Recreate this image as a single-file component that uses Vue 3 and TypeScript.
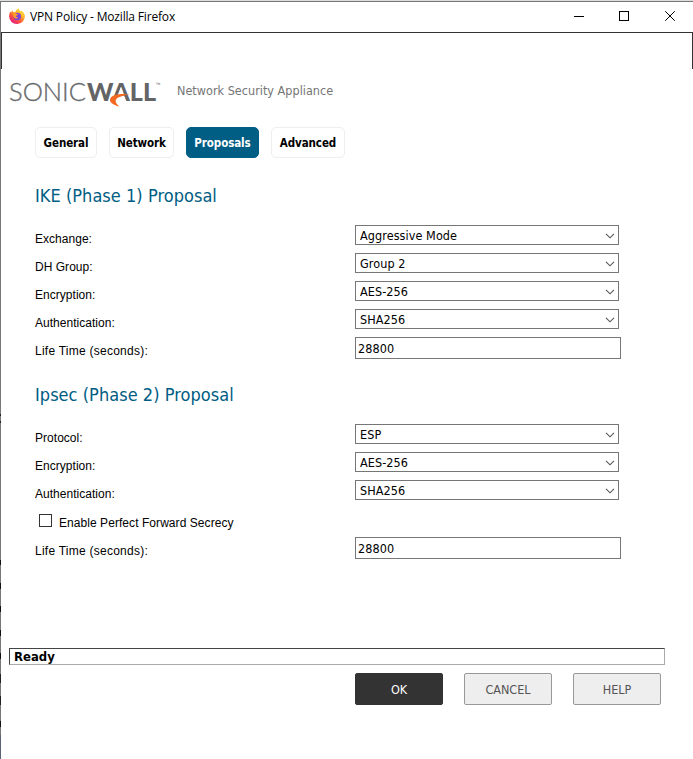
<script setup lang="ts">
import { ref } from 'vue'

interface Field {
  label: string
  value: string
  kind: 'select' | 'text' | 'check'
}

const tabs = ['General', 'Network', 'Proposals', 'Advanced']
const active = ref('Proposals')

const phase1: Field[] = [
  { label: 'Exchange:', value: 'Aggressive Mode', kind: 'select' },
  { label: 'DH Group:', value: 'Group 2', kind: 'select' },
  { label: 'Encryption:', value: 'AES-256', kind: 'select' },
  { label: 'Authentication:', value: 'SHA256', kind: 'select' },
  { label: 'Life Time (seconds):', value: '28800', kind: 'text' },
]
const phase2: Field[] = [
  { label: 'Protocol:', value: 'ESP', kind: 'select' },
  { label: 'Encryption:', value: 'AES-256', kind: 'select' },
  { label: 'Authentication:', value: 'SHA256', kind: 'select' },
  { label: 'Enable Perfect Forward Secrecy', value: '', kind: 'check' },
  { label: 'Life Time (seconds):', value: '28800', kind: 'text' },
]
const sections = [
  { title: 'IKE (Phase 1) Proposal', fields: phase1 },
  { title: 'Ipsec (Phase 2) Proposal', fields: phase2 },
]
</script>

<template>
  <div class="window">
    <div class="edge"></div>
    <div class="main">
      <header class="titlebar">
        <svg class="fox" width="16" height="16" viewBox="0 0 16 16">
          <defs>
            <linearGradient id="flame" x1="0.85" y1="0.05" x2="0.2" y2="0.95">
              <stop offset="0" stop-color="#fff03f" />
              <stop offset="0.35" stop-color="#ffb52b" />
              <stop offset="0.65" stop-color="#ff5a36" />
              <stop offset="1" stop-color="#e31587" />
            </linearGradient>
          </defs>
          <path d="M1.2 3.4 2 4.6 3.7 2.2 4.3 4.2 6.3 3.9C7 2 8.400 1 9.600 0c-.1 1.700 1 2.500 2.300 3.300l.5-.8c1.900 1.400 3.500 3.500 3.500 6.100A7.800 7.400 0 0 1 8 16 7.800 7.600 0 0 1 .1 8.600C0 6.600.5 4.900 1.200 3.400Z" fill="url(#flame)" />
          <circle cx="8.300" cy="8.500" r="3.700" fill="#7a42dc" />
          <path d="M3.600 5.200c1.500-.9 3-.4 3.900.6l2 .3c-.3 1-1.600 1.100-2.200 1.700-.5.900.4 2.200 2.200 1.500-1 2.400-5.400 1.800-5.900-4.100Z" fill="#ff9a2c" />
        </svg>
        <span class="caption">VPN Policy - Mozilla Firefox</span>
        <svg class="controls" width="104" height="12" viewBox="0 0 104 12" fill="none" stroke="#000" stroke-width="1">
          <path d="M0 6.500h10" />
          <rect x="45.500" y="1.500" width="9" height="9" />
          <path d="M91.200 1.200 100.800 10.800M100.800 1.200 91.200 10.800" />
        </svg>
      </header>
      <div class="address"></div>

      <div class="brand">
        <svg class="logo" width="152" height="28" viewBox="0 0 152 28">
          <text class="thin" x="0" y="21.500" textLength="77" lengthAdjust="spacingAndGlyphs">SONIC</text>
          <text class="heavy" x="78" y="21.500" textLength="69" lengthAdjust="spacingAndGlyphs">WALL</text>
          <path d="M112 8 108.800 16 105.500 22h11.200L114.800 16Z" fill="#fff" />
          <path d="M120.500 15.400c-8-1.200-17.200-.4-19.300 4.300-1.300 3.300 2.800 6.200 9 7.800-3.300-3.300-4.500-5.700-2.600-7.800 2.300-2.500 7.500-3 12.900-4.300Z" fill="#f26a21" />
          <text class="tm" x="146.500" y="6.500">™</text>
        </svg>
        <span class="product">Network Security Appliance</span>
      </div>

      <nav class="tabs">
        <button v-for="t in tabs" :key="t" class="tab" :class="[t.toLowerCase(), { on: t === active }]" @click="active = t"><span>{{ t }}</span></button>
      </nav>

      <section v-for="s in sections" :key="s.title" class="section">
        <h2>{{ s.title }}</h2>
        <div v-for="f in s.fields" :key="f.label" class="row" :class="f.kind">
          <template v-if="f.kind === 'check'">
            <span class="box"></span>
            <span class="label">{{ f.label }}</span>
          </template>
          <template v-else>
            <span class="label">{{ f.label }}</span>
            <div class="field">
              <span>{{ f.value }}</span>
              <svg v-if="f.kind === 'select'" class="arrow" width="10" height="6" viewBox="0 0 10 6">
                <path d="M1 .8 5 4.800 9 .8" fill="none" stroke="#555" stroke-width="1.100" />
              </svg>
            </div>
          </template>
        </div>
      </section>

      <div class="status"><span>Ready</span></div>
      <div class="actions">
        <button class="action primary">OK</button>
        <button class="action">CANCEL</button>
        <button class="action">HELP</button>
      </div>
    </div>
  </div>
</template>

<style>
body { background: #fff; overflow: hidden; }
</style>

<style scoped>
* { box-sizing: border-box; }
.window {
  display: flex;
  width: 693px;
  height: 759px;
  border-top: 1px solid #ddd;
  background: #fff;
  font-family: "DejaVu Sans Condensed", "DejaVu Sans", sans-serif;
  font-stretch: condensed;
  font-size: 12.500px;
  color: #000;
}
.edge {
  flex: none;
  width: 1px;
  background: linear-gradient(#777 0 413px, #222 413px 415px, #777 415px 420px, #222 420px 422px, #777 422px 559px, #111 559px 564px, #777 564px 582px, #111 582px 588px, #777 588px 605px, #111 605px 611px, #777 611px 629px, #111 629px 635px, #777 635px 652px, #111 652px 658px, #777 658px 673px, #222 673px 682px, #777 682px 695px, #222 695px 704px, #777 704px 720px, #111 720px 726px, #777 726px 734px, #596474 734px);
}
.main { flex: 1; display: flex; flex-direction: column; border-top: 1px solid #777; }
.titlebar { display: flex; align-items: center; height: 30px; padding: 0 15px 0 8px; flex: none; }
.fox { margin-top: -2px; }
.caption {
  margin: -1px 0 0 5px;
  font-family: "Open Sans", "Noto Sans", sans-serif;
  font-stretch: normal;
  font-size: 12px;
  letter-spacing: -0.17px;
  white-space: nowrap;
}
.controls { margin: -2px 0 0 auto; }
.address { flex: none; height: 37px; border: 1px solid #333; border-bottom: 0; }
.brand { display: flex; flex: none; height: 58px; padding: 10px 0 0 8px; }
.logo { overflow: visible; }
.thin { font: 300 25px Lato, sans-serif; fill: #6a6b6d; stroke: #6a6b6d; stroke-width: 0.35px; }
.heavy { font: 900 25px Lato, sans-serif; fill: #636466; }
.tm { font: 5px "Liberation Sans", sans-serif; fill: #666; }
.product { margin: 4px 0 0 16px; line-height: 16px; color: #757575; letter-spacing: 0.02px; white-space: nowrap; }
.tabs { display: flex; flex: none; gap: 12px; padding-left: 34px; height: 31px; }
.tab {
  padding: 0;
  border: 1px solid #eee;
  border-radius: 5px;
  background: #fff;
  color: #000;
  font: inherit;
  font-size: 11.500px;
  font-weight: 700;
  letter-spacing: -0.1px;
}
.general { width: 62px; }
.network { width: 65px; }
.proposals { width: 73px; }
.advanced { width: 74px; }
.on { background: #005d83; border-color: #005d83; color: #fff; }
.section { flex: none; padding: 26px 0 0 34px; }
.section + .section { padding-top: 24px; }
h2 { margin: 0 0 17px; height: 24px; line-height: 24px; font-size: 18px; font-weight: 400; color: #005d83; letter-spacing: 0.04px; white-space: nowrap; }
.row { display: flex; height: 28px; }
.row.text { height: 22px; }
.section:last-of-type .row.text { margin-top: 1px; }
.label { width: 320px; flex: none; font-family: "Liberation Sans", sans-serif; font-size: 12px; line-height: 14px; padding-top: 7px; letter-spacing: 0.03px; white-space: nowrap; }
.text .label { letter-spacing: 0.25px; }
.row.check { padding-left: 4px; }
.check .label { width: auto; margin-left: 7px; padding-top: 8px; letter-spacing: 0.06px; }
.box { width: 13px; height: 13px; margin-top: 6px; border: 1px solid #333; }
.field { display: flex; align-items: center; justify-content: space-between; width: 264px; height: 20px; padding: 0 3px 0 4px; border: 1px solid #767676; letter-spacing: 0.08px; }
.arrow { margin-top: 2px; }
.text .field { width: 266px; height: 22px; padding-left: 2px; }
.status { flex: none; display: flex; align-items: center; width: 656px; height: 17px; margin: 89px 0 0 8px; padding-left: 4px; border: 1px solid; border-color: #444 #aaa #aaa #444; font-weight: 700; font-size: 13px; }
.actions { display: flex; gap: 21px; margin: 8px 0 0 354px; }
.action { width: 88px; height: 32px; padding: 0; border: 1px solid #999; border-radius: 2px; background: #eee; color: #555; font: inherit; letter-spacing: 0; }
.primary { background: #333; border-color: #333; color: #fff; }
</style>
